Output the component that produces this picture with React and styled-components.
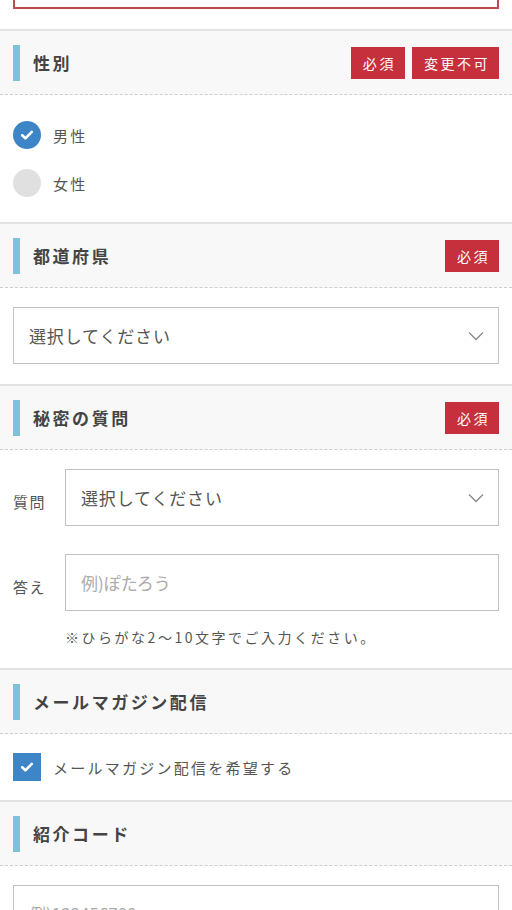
import React from "react";
import styled, { createGlobalStyle } from "styled-components";

const GlobalStyle = createGlobalStyle`
  *, *::before, *::after {
    box-sizing: border-box;
  }
  html, body {
    margin: 0;
    padding: 0;
    background: #fff;
    overflow: hidden;
  }
  body {
    font-family: "Noto Sans CJK JP", "Noto Sans", sans-serif;
    color: #555;
  }
`;

export default function App() {
  return (
    <>
      <GlobalStyle />
      <Page>
        <TopBlock>
          <ErrorInput />
        </TopBlock>

        <Section>
          <Header>
            <Bar />
            <Title>性別</Title>
            <Badges>
              <Badge>必須</Badge>
              <Badge>変更不可</Badge>
            </Badges>
          </Header>
          <Body top={26} bottom={25}>
            <OptionList>
              <Option>
                <Radio checked>
                  <Check />
                </Radio>
                <OptionLabel>男性</OptionLabel>
              </Option>
              <Option>
                <Radio />
                <OptionLabel>女性</OptionLabel>
              </Option>
            </OptionList>
          </Body>
        </Section>

        <Section>
          <Header>
            <Bar />
            <Title>都道府県</Title>
            <Badges>
              <Badge>必須</Badge>
            </Badges>
          </Header>
          <Body>
            <Select>
              <span>選択してください</span>
              <Chevron />
            </Select>
          </Body>
        </Section>

        <Section>
          <Header>
            <Bar />
            <Title>秘密の質問</Title>
            <Badges>
              <Badge>必須</Badge>
            </Badges>
          </Header>
          <Body bottom={21}>
            <FieldRow>
              <FieldLabel>質問</FieldLabel>
              <Select>
                <span>選択してください</span>
                <Chevron />
              </Select>
            </FieldRow>
            <FieldRow>
              <FieldLabel>答え</FieldLabel>
              <TextBox>
                <Placeholder>例)ぽたろう</Placeholder>
              </TextBox>
            </FieldRow>
            <Note>※ひらがな2〜10文字でご入力ください。</Note>
          </Body>
        </Section>

        <Section>
          <Header>
            <Bar />
            <Title>メールマガジン配信</Title>
          </Header>
          <Body bottom={19}>
            <Option>
              <CheckBox>
                <Check />
              </CheckBox>
              <OptionLabel>メールマガジン配信を希望する</OptionLabel>
            </Option>
          </Body>
        </Section>

        <Section>
          <Header>
            <Bar />
            <Title>紹介コード</Title>
          </Header>
          <Body>
            <TextBox>
              <Placeholder>例)123456789</Placeholder>
            </TextBox>
          </Body>
        </Section>
      </Page>
    </>
  );
}

function Check() {
  return (
    <svg width="16" height="16" viewBox="0 0 16 16" fill="none">
      <path
        d="M3.2 8.2l3.2 3.1 6.4-6.4"
        stroke="#fff"
        strokeWidth="2.6"
        strokeLinecap="round"
        strokeLinejoin="round"
      />
    </svg>
  );
}

function Chevron() {
  return (
    <ChevronSvg width="16" height="10" viewBox="0 0 16 10" fill="none">
      <path d="M1 1.5l7 7 7-7" stroke="#888" strokeWidth="1.3" />
    </ChevronSvg>
  );
}

const Page = styled.div`
  width: 512px;
  height: 910px;
  overflow: hidden;
`;

const TopBlock = styled.div`
  margin-top: -49px;
  padding: 0 13px 20px;
`;

const ErrorInput = styled.div`
  height: 58px;
  border: 2px solid #bf4b52;
  background: #fff;
`;

const Section = styled.section`
  border-top: 2px solid #e2e2e2;
`;

const Header = styled.div`
  display: flex;
  align-items: center;
  height: 64px;
  padding: 0 13px;
  background: #f8f8f8;
  border-bottom: 1px dashed #cfcfcf;
`;

const Bar = styled.span`
  width: 7px;
  height: 36px;
  background: #7cc3da;
  margin-right: 13px;
`;

const Title = styled.h2`
  margin: 0;
  flex: 1;
  font-size: 17px;
  font-weight: 700;
  color: #444;
  letter-spacing: 0.15em;
`;

const Badges = styled.div`
  display: flex;
  gap: 7px;
`;

const Badge = styled.span`
  display: flex;
  align-items: center;
  height: 32px;
  padding: 0 9px 0 12px;
  background: #c5303c;
  color: #fff;
  font-size: 14px;
  letter-spacing: 0.18em;
`;

const Body = styled.div`
  padding: ${(p) => p.top ?? 19}px 13px ${(p) => p.bottom ?? 20}px;
`;

const OptionList = styled.div`
  display: flex;
  flex-direction: column;
  gap: 20px;
`;

const Option = styled.label`
  display: flex;
  align-items: center;
`;

const Radio = styled.span`
  display: flex;
  align-items: center;
  justify-content: center;
  width: 28px;
  height: 28px;
  border-radius: 50%;
  background: ${(p) => (p.checked ? "#3d85c6" : "#e0e0e0")};
`;

const CheckBox = styled.span`
  display: flex;
  align-items: center;
  justify-content: center;
  width: 28px;
  height: 28px;
  background: #3d85c6;
`;

const OptionLabel = styled.span`
  margin-left: 12px;
  font-size: 15px;
  color: #555;
  letter-spacing: 0.15em;
`;

const Select = styled.div`
  flex: 1;
  display: flex;
  align-items: center;
  justify-content: space-between;
  height: 57px;
  padding: 0 14px 0 15px;
  border: 1px solid #c2c2c2;
  font-size: 17px;
  color: #555;
  letter-spacing: 0.05em;
`;

const ChevronSvg = styled.svg`
  display: block;
`;

const TextBox = styled.div`
  flex: 1;
  display: flex;
  align-items: center;
  height: 57px;
  padding: 0 15px;
  border: 1px solid #c2c2c2;
`;

const Placeholder = styled.span`
  font-size: 17px;
  color: #aaa;
`;

const FieldRow = styled.div`
  display: flex;
  align-items: center;
  & + & {
    margin-top: 28px;
  }
`;

const FieldLabel = styled.span`
  width: 52px;
  padding-top: 7px;
  font-size: 15px;
  color: #555;
  letter-spacing: 0.1em;
`;

const Note = styled.p`
  margin: 16px 0 0 52px;
  font-size: 14px;
  line-height: 20px;
  color: #555;
  letter-spacing: 0.18em;
`;
